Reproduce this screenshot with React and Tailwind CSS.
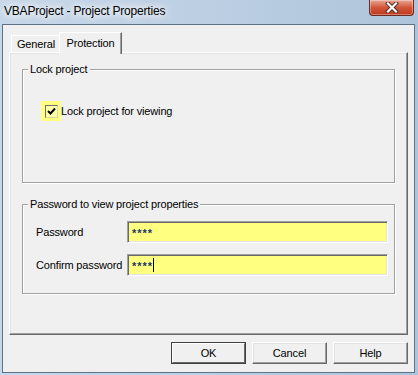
import React from 'react';

// classic 3D edges
const raised = "border border-t-white border-l-white border-r-[#696969] border-b-[#696969] shadow-[inset_-1px_-1px_0_#a0a0a0,inset_1px_1px_0_#e3e3e3]";
const sunken = "border border-t-[#a0a0a0] border-l-[#a0a0a0] border-r-white border-b-white shadow-[inset_1px_1px_0_#696969,inset_-1px_-1px_0_#e3e3e3]";

const GroupBox = ({ label, className, children }) => (
  <div className={`relative border border-[#a0a0a0] shadow-[inset_1px_1px_0_#fff,1px_1px_0_#fff] ${className}`}>
    <span className="absolute -top-[8px] left-[5px] bg-[#f0f0f0] px-[2px] leading-[14px]">{label}</span>
    {children}
  </div>
);

const Button = ({ children, isDefault }) => (
  <button
    className={`w-[75px] h-[22px] bg-[#f0f0f0] text-[11px] text-black ${
      isDefault
        ? "outline outline-1 outline-[#404040] -outline-offset-1 border-2 border-t-white border-l-white border-r-[#696969] border-b-[#696969]"
        : raised
    }`}
  >
    {children}
  </button>
);

const PasswordField = ({ label, caret }) => (
  <div className="flex items-center h-[22px]">
    <span className="w-[91px] leading-[14px]">{label}</span>
    <div className={`${sunken} w-[261px] h-full bg-[#ffff80] flex items-center pl-[4px]`}>
      <span className="text-[#1c3668] text-[11px] leading-[12px] tracking-[1px] font-bold mt-[2px]">****</span>
      {caret && <span className="w-px h-[14px] bg-black"></span>}
    </div>
  </div>
);

export default function App() {
  return (
    <div className="w-[418px] h-[375px] flex flex-col bg-gradient-to-r from-[#c6d7e9] via-[#bccfe3] to-[#aec4da] font-['Liberation_Sans',Arial,sans-serif] text-[11px] tracking-[-0.15px] text-black">
      {/* Title bar */}
      <div className="h-[24px] flex items-start justify-between pl-[4px] pr-[4px]">
        <span className="text-[12px] leading-[15px] mt-[4px] tracking-[-0.2px] [text-shadow:0_0_6px_#fff,0_0_10px_#fff,0_0_14px_#fff]">
          VBAProject - Project Properties
        </span>
        <div className="w-[45px] h-[16px] rounded-b-[4px] border border-t-0 border-[#6b2b20] bg-gradient-to-b from-[#e8a593] via-[#cf5639] to-[#c0361c] flex items-center justify-center shadow-[inset_0_0_0_1px_rgba(255,255,255,0.35)]">
          <svg width="14" height="11" viewBox="0 0 14 11">
            <path d="M3 1.5 L11 9.5 M11 1.5 L3 9.5" stroke="#4a2a25" strokeWidth="4" strokeLinecap="square" />
            <path d="M3 1.5 L11 9.5 M11 1.5 L3 9.5" stroke="#fff" strokeWidth="2.2" strokeLinecap="square" />
          </svg>
        </div>
      </div>

      {/* Client area */}
      <div className="ml-[2px] w-[413px] h-[349px] border border-[#5e7288] bg-[#f0f0f0] flex flex-col px-[6px] pt-[7px]">
        {/* Tabs */}
        <div className="flex items-end h-[20px] pl-[2px]">
          <div className="h-[17px] w-[50px] border border-b-0 border-t-white border-l-white border-r-[#a0a0a0] bg-[#f0f0f0] flex items-center justify-center pt-[1px]">
            General
          </div>
          <div className="relative z-10 -ml-[2px] -mb-[2px] h-[22px] w-[63px] border border-b-0 border-t-white border-l-white border-r-[#696969] shadow-[inset_-1px_0_0_#a0a0a0] bg-[#f0f0f0] flex justify-center pt-[2px]">
            Protection
          </div>
        </div>

        {/* Tab panel */}
        <div className={`${raised} h-[283px] flex flex-col px-[12px] pt-[16px]`}>
          <GroupBox label="Lock project" className="h-[114px] pt-[31px] pl-[18px]">
            <div className="flex items-center">
              <div className="w-[20px] h-[20px] bg-[#ffff80] flex items-center justify-center">
                <div className="w-[13px] h-[13px] border border-t-[#6f6f6f] border-l-[#6f6f6f] border-r-[#d8d8a0] border-b-[#d8d8a0] bg-[#ffffa8] flex items-center justify-center">
                  <svg width="9" height="9" viewBox="0 0 9 9">
                    <path d="M1 4 L3.5 6.5 L8 1.5" stroke="#000" strokeWidth="2" fill="none" />
                  </svg>
                </div>
              </div>
              <span className="leading-[14px]">Lock project for viewing</span>
            </div>
          </GroupBox>

          <GroupBox label="Password to view project properties" className="mt-[21px] h-[90px] pt-[16px] pl-[13px] flex flex-col gap-[11px]">
            <PasswordField label="Password" />
            <PasswordField label="Confirm password" caret />
          </GroupBox>
        </div>

        {/* Buttons */}
        <div className="flex justify-end gap-[6px] mt-[7px]">
          <Button isDefault>OK</Button>
          <Button>Cancel</Button>
          <Button>Help</Button>
        </div>
      </div>
    </div>
  );
}
